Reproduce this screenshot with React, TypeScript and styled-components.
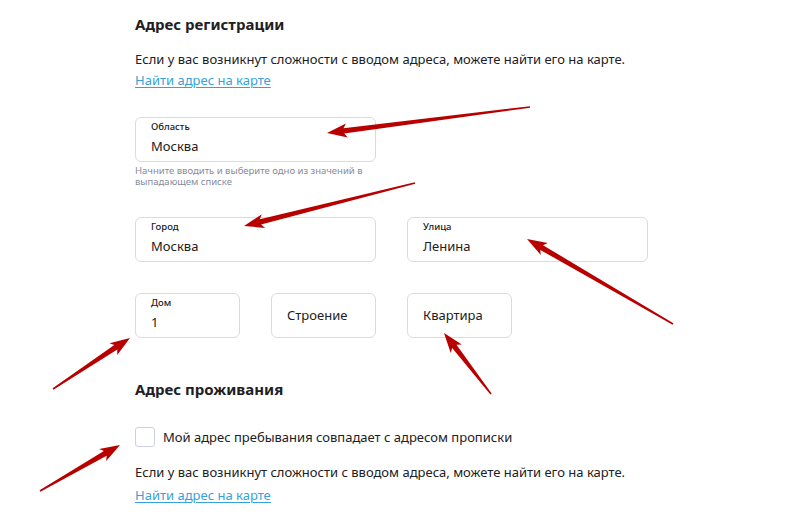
import styled, { createGlobalStyle } from 'styled-components';

const GlobalStyle = createGlobalStyle`
    html, body {
        margin: 0;
        padding: 0;
        background: #ffffff;
    }
    body {
        font-family: "Noto Sans", "DejaVu Sans", sans-serif;
        color: #1f1f24;
    }
`;

const Page = styled.div`
    position: relative;
    width: 800px;
    height: 523px;
    overflow: hidden;
    padding: 14px 0 0 135px;
    box-sizing: border-box;
`;

const Heading = styled.h2<{ $top?: number }>`
    margin: ${p => p.$top ?? 0}px 0 0;
    font-size: 15px;
    line-height: 20px;
    font-weight: 700;
    color: #202024;
`;

const Text = styled.p<{ $top: number }>`
    margin: ${p => p.$top}px 0 0;
    font-size: 13px;
    line-height: 18px;
    color: #202024;
`;

const MapLink = styled.a<{ $top: number }>`
    display: inline-block;
    margin-top: ${p => p.$top}px;
    font-size: 13px;
    line-height: 18px;
    color: #35a2dc;
    text-decoration: underline;
    text-underline-offset: 2px;
`;

const Row = styled.div<{ $top: number }>`
    display: flex;
    gap: 31px;
    margin-top: ${p => p.$top}px;
`;

const Column = styled.div`
    display: flex;
    flex-direction: column;
`;

const Field = styled.div<{ $w: number }>`
    width: ${p => p.$w}px;
    height: 45px;
    box-sizing: border-box;
    border: 1px solid #d7dbe7;
    border-radius: 6px;
    padding: 3px 15px 0;
    display: flex;
    flex-direction: column;
`;

const EmptyField = styled(Field)`
    padding-top: 0;
    justify-content: center;
`;

const Label = styled.span`
    font-size: 9.5px;
    line-height: 12px;
    font-weight: 500;
    color: #202024;
`;

const Value = styled.span`
    margin-top: 5px;
    font-size: 13px;
    line-height: 17px;
    color: #202024;
`;

const Placeholder = styled.span`
    font-size: 13px;
    line-height: 17px;
    color: #202024;
`;

const Hint = styled.div`
    width: 245px;
    margin-top: 3px;
    font-size: 9.5px;
    line-height: 11px;
    color: #868b9d;
`;

const CheckRow = styled.label`
    display: flex;
    align-items: center;
    gap: 8px;
    margin-top: 28px;
    font-size: 13px;
    color: #202024;
`;

const Box = styled.span`
    width: 20px;
    height: 20px;
    box-sizing: border-box;
    border: 1px solid #cdd2e0;
    border-radius: 3px;
`;

const Overlay = styled.svg`
    position: absolute;
    inset: 0;
    pointer-events: none;
`;

type Arrow = [number, number, number, number];

const arrows: Arrow[] = [
    [530, 107, 327, 133],
    [415, 183, 244, 226],
    [673, 324, 527, 239],
    [491, 394, 444, 333],
    [53, 389, 130, 338],
    [40, 491, 120, 445],
];

function arrowPoints([x1, y1, x2, y2]: Arrow) {
    const dx = x2 - x1;
    const dy = y2 - y1;
    const len = Math.hypot(dx, dy);
    const ux = dx / len;
    const uy = dy / len;
    const nx = -uy;
    const ny = ux;
    const headLen = 17;
    const headW = 7;
    const bx = x2 - ux * headLen;
    const by = y2 - uy * headLen;
    const pts: [number, number][] = [
        [x1 + nx * 0.8, y1 + ny * 0.8],
        [bx + nx * 2.7, by + ny * 2.7],
        [bx - ux * 3 + nx * headW, by - uy * 3 + ny * headW],
        [x2, y2],
        [bx - ux * 3 - nx * headW, by - uy * 3 - ny * headW],
        [bx - nx * 2.7, by - ny * 2.7],
        [x1 - nx * 0.8, y1 - ny * 0.8],
    ];
    return pts.map(p => p.map(v => v.toFixed(1)).join(',')).join(' ');
}

export default function App() {
    return (
        <Page>
            <GlobalStyle />
            <Heading>Адрес регистрации</Heading>
            <Text $top={16}>Если у вас возникнут сложности с вводом адреса, можете найти его на карте.</Text>
            <MapLink href="#" $top={3}>Найти адрес на карте</MapLink>

            <Row $top={27}>
                <Column>
                    <Field $w={241}>
                        <Label>Область</Label>
                        <Value>Москва</Value>
                    </Field>
                    <Hint>Начните вводить и выберите одно из значений в выпадающем списке</Hint>
                </Column>
            </Row>

            <Row $top={30}>
                <Field $w={241}>
                    <Label>Город</Label>
                    <Value>Москва</Value>
                </Field>
                <Field $w={241}>
                    <Label>Улица</Label>
                    <Value>Ленина</Value>
                </Field>
            </Row>

            <Row $top={31}>
                <Field $w={105}>
                    <Label>Дом</Label>
                    <Value>1</Value>
                </Field>
                <EmptyField $w={105}>
                    <Placeholder>Строение</Placeholder>
                </EmptyField>
                <EmptyField $w={105}>
                    <Placeholder>Квартира</Placeholder>
                </EmptyField>
            </Row>

            <Heading $top={41}>Адрес проживания</Heading>
            <CheckRow>
                <Box />
                Мой адрес пребывания совпадает с адресом прописки
            </CheckRow>
            <Text $top={16}>Если у вас возникнут сложности с вводом адреса, можете найти его на карте.</Text>
            <MapLink href="#" $top={5}>Найти адрес на карте</MapLink>

            <Overlay width="800" height="523" viewBox="0 0 800 523">
                {arrows.map((a, i) => (
                    <polygon key={i} points={arrowPoints(a)} fill="#b80000" />
                ))}
            </Overlay>
        </Page>
    );
}
